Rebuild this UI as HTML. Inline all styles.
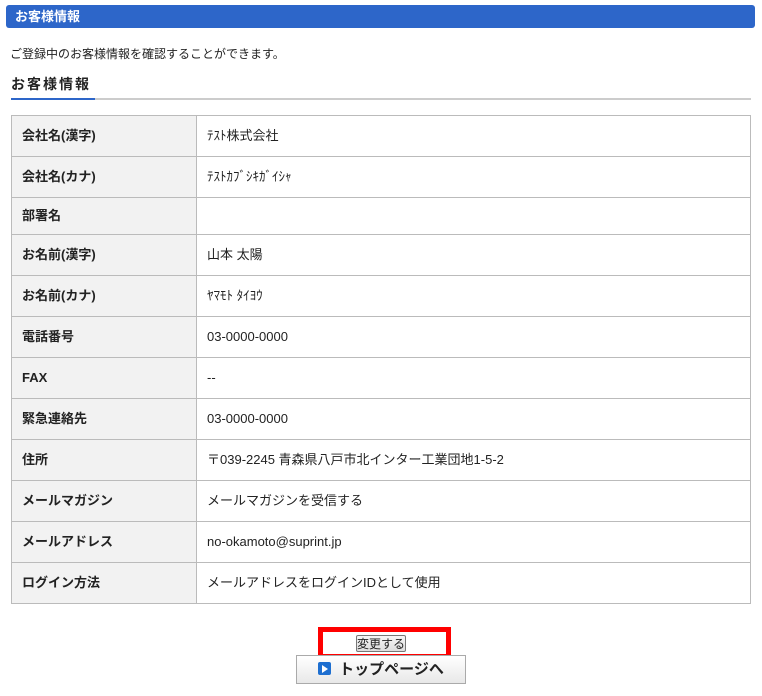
<!DOCTYPE html>
<html><head><meta charset="utf-8"><style>
body{margin:0;background:#fff;font-family:"Liberation Sans","Noto Sans CJK JP",sans-serif;color:#222;width:762px;height:696px;position:relative;overflow:hidden}
.bar{position:absolute;left:6px;top:5px;width:749px;height:23px;background:#2d66c9;border-radius:3px;color:#fff;font-weight:bold;font-size:13px;line-height:23px;padding-left:9px;box-sizing:border-box}
.intro{position:absolute;left:10px;top:45px;font-size:12px}
.h{position:absolute;left:11px;top:74px;font-size:14px;font-weight:bold;letter-spacing:2px}
.ul{position:absolute;left:11px;top:98px;width:740px;height:2px;background:#ccc}
.ul i{position:absolute;left:0;top:0;width:84px;height:2px;background:#2d66c9}
table{position:absolute;left:11px;top:115px;width:740px;border-collapse:collapse;font-size:13px}
td{border:1px solid #bbb;padding:0 10px;height:40px;line-height:16px}
tr.s td{height:36px}
td.l{background:#f2f2f2;font-weight:bold;width:164px}
.red{position:absolute;left:318px;top:627px;width:133px;height:32px;border:5px solid #f00;box-sizing:border-box}
.chg{position:absolute;left:356px;top:635px;width:50px;height:17px;border:1px solid #777;border-radius:2px;background:linear-gradient(#f6f6f6,#ddd);font-size:12px;text-align:center;line-height:17px;box-sizing:border-box}
.top{position:absolute;left:296px;top:655px;width:170px;height:29px;border:1px solid #aaa;background:linear-gradient(#fff,#e8e8e8);box-sizing:border-box;font-size:15px;font-weight:bold;line-height:27px;text-align:center}
.top b{display:inline-block;width:13px;height:13px;background:#1e6fd0;border-radius:2px;vertical-align:-1px;margin-right:8px;position:relative}
.top b:after{content:"";position:absolute;left:4px;top:3px;border-left:6px solid #fff;border-top:4px solid transparent;border-bottom:4px solid transparent}
</style></head><body>
<div class="bar">お客様情報</div>
<div class="intro">ご登録中のお客様情報を確認することができます。</div>
<div class="h">お客様情報</div>
<div class="ul"><i></i></div>
<table>
<tr><td class="l">会社名(漢字)</td><td>ﾃｽﾄ株式会社</td></tr>
<tr><td class="l">会社名(カナ)</td><td>ﾃｽﾄｶﾌﾞｼｷｶﾞｲｼｬ</td></tr>
<tr class="s"><td class="l">部署名</td><td></td></tr>
<tr><td class="l">お名前(漢字)</td><td>山本 太陽</td></tr>
<tr><td class="l">お名前(カナ)</td><td>ﾔﾏﾓﾄ ﾀｲﾖｳ</td></tr>
<tr><td class="l">電話番号</td><td>03-0000-0000</td></tr>
<tr><td class="l">FAX</td><td>--</td></tr>
<tr><td class="l">緊急連絡先</td><td>03-0000-0000</td></tr>
<tr><td class="l">住所</td><td>〒039-2245 青森県八戸市北インター工業団地1-5-2</td></tr>
<tr><td class="l">メールマガジン</td><td>メールマガジンを受信する</td></tr>
<tr><td class="l">メールアドレス</td><td>no-okamoto@suprint.jp</td></tr>
<tr><td class="l">ログイン方法</td><td>メールアドレスをログインIDとして使用</td></tr>
</table>
<div class="red"></div>
<div class="chg">変更する</div>
<div class="top"><b></b>トップページへ</div>
</body></html>
